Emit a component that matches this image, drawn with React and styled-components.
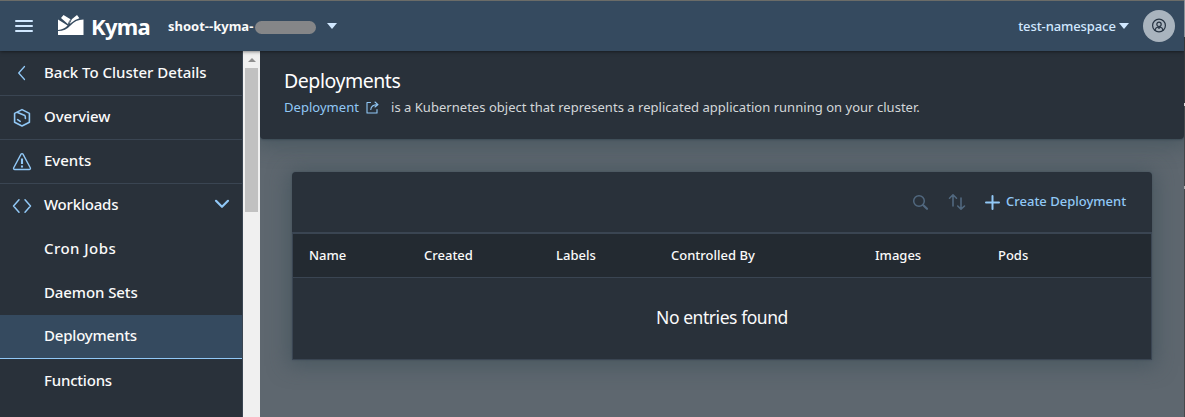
import React from 'react';
import styled, { createGlobalStyle } from 'styled-components';

const Global = createGlobalStyle`
  * { box-sizing: border-box; }
  html, body { margin: 0; height: 100%; overflow: hidden; }
  body { font-family: "Noto Sans", "Open Sans", sans-serif; color: #fafafa; background: #5b666f; }
  button { font: inherit; color: inherit; background: none; border: 0; padding: 0; }
`;

const Page = styled.div`
  width: 100vw;
  height: 100vh;
  overflow: hidden;
  display: grid;
  grid-template-rows: 51px 1fr;
  grid-template-columns: minmax(0, 1fr) 1px;
`;

const Header = styled.header`
  position: relative;
  z-index: 3;
  display: flex;
  align-items: center;
  border-top: 1px solid #6b6c68;
  background: #354a5f;
  box-shadow: 0 0 4px rgba(0, 0, 0, 0.7);
  padding: 0 9px 0 15px;
`;

const WindowEdge = styled.div`
  grid-row: 1 / 3;
  grid-column: 2;
  z-index: 4;
  background: linear-gradient(#8a9096 0 37px, #35383b 37px 103px, #d5d5d5 103px 106px, #45484b 106px 186px, #b0b0b0 186px 189px, #46494c 189px);
`;

const MenuButton = styled.button`
  display: flex;
  width: 18px;
  height: 14px;
  flex-direction: column;
  justify-content: space-between;
  padding: 1px 0;
  span { height: 2px; background: #d1e8ff; border-radius: 1px; }
`;

const Brand = styled.div`
  display: flex;
  align-items: center;
  margin-left: 24px;
  width: 94px;
  gap: 7px;
  svg { flex: none; margin-bottom: 2px; }
`;

const BrandName = styled.span`
  font-size: 22px;
  font-weight: 700;
  line-height: 30px;
  letter-spacing: -0.7px;
  color: #fff;
`;

const ClusterName = styled.button`
  display: flex;
  align-items: center;
  margin-left: 17px;
  font-size: 13px;
  font-weight: 700;
`;

const Redaction = styled.span`
  width: 61px;
  height: 13px;
  border-radius: 7px;
  background: #858688;
  margin: 2px 11px 0 0;
`;

const NameText = styled.span`width: 87px; white-space: nowrap; text-align: left;`;

const Triangle = styled.span`
  border: 5px solid transparent;
  border-top: 6px solid #d1e8ff;
  border-bottom: 0;
`;

const Namespace = styled.button`
  display: flex;
  align-items: center;
  gap: 3px;
  margin-left: auto;
  font-size: 13px;
  color: #d1e8ff;
  font-weight: 500;
  padding-bottom: 1px;
`;
const NamespaceText = styled.span`width: 98px; white-space: nowrap; letter-spacing: -0.1px;`;

const Avatar = styled.div`
  width: 32px;
  height: 32px;
  margin-left: 14px;
  border-radius: 50%;
  background: #a9b4be;
  display: grid;
  place-items: center;
`;

const Body = styled.div`
  display: grid;
  grid-template-columns: 243px 17px minmax(0, 1fr);
  min-height: 0;
`;

const Sidebar = styled.nav`
  background: #29313a;
  border-right: 1px solid #3a4552;
  padding-top: 1px;
  overflow: hidden;
`;

const NavItem = styled.a`
  display: flex;
  align-items: center;
  height: ${p => (p.$tall ? 45 : 44)}px;
  padding-left: ${p => (p.$child ? 44 : 12)}px;
  padding-right: 12px;
  padding-bottom: 3px;
  margin-top: ${p => (p.$selected ? -1 : 0)}px;
  border-bottom: 1px solid ${p => (p.$selected ? '#91c8f6' : p.$line ? '#3a4552' : 'transparent')};
  background: ${p => (p.$selected ? '#354a5f' : 'transparent')};
  font-size: 15px;
  font-weight: 500;
  letter-spacing: ${p => p.$spacing || 0}px;
  white-space: nowrap;
`;

const NavIcon = styled.span`
  width: 32px;
  height: 20px;
  flex: none;
  display: flex;
  margin-top: 4px;
`;

const Expand = styled.span`
  margin-left: auto;
  display: flex;
`;

const Scrollbar = styled.div`
  background: #f0f0f0;
  display: flex;
  flex-direction: column;
  align-items: center;
`;
const ScrollUp = styled.span`
  margin: 7px 0 6px;
  border: 4px solid transparent;
  border-bottom: 4px solid #8f8f8f;
  border-top: 0;
`;
const ScrollThumb = styled.div`
  width: 13px;
  height: 144px;
  background: #c1c1c1;
`;

const Main = styled.main`
  display: flex;
  flex-direction: column;
  background: #5e676f;
  overflow: hidden;
`;

const PageHead = styled.section`
  height: 88px;
  flex: none;
  padding: 16px 24px;
  background: #29313a;
  border-radius: 0 0 4px 4px;
  box-shadow: 0 2px 20px 4px rgba(54, 74, 84, 0.55), 0 1px 2px rgba(45, 60, 72, 0.6);
`;

const Title = styled.h1`
  margin: 0;
  font-size: 19.5px;
  line-height: 28px;
  font-weight: 400;
  letter-spacing: -0.45px;
  color: #fff;
`;

const Description = styled.p`
  margin: 2px 0 0;
  display: flex;
  align-items: center;
  height: 20px;
  font-size: 13px;
  letter-spacing: 0.03px;
  color: #d3d7d9;
  white-space: nowrap;
  svg { margin: 0 12px 0 7px; }
`;

const Link = styled.a`color: #91c8f6; width: 75px;`;

const Card = styled.section`
  margin: 33px 32px 0;
  height: 188px;
  display: flex;
  flex-direction: column;
  border-radius: 4px 4px 0 0;
  background: #29313a;
  box-shadow: 0 2px 20px 4px rgba(54, 74, 84, 0.5), 0 0 2px rgba(45, 60, 72, 0.5);
`;

const Toolbar = styled.div`
  height: 60px;
  display: flex;
  align-items: center;
  justify-content: flex-end;
  padding-right: 26px;
`;
const ToolIcon = styled.button`
  display: flex;
  margin-right: ${p => p.$gap}px;
`;
const CreateButton = styled.button`
  display: flex;
  align-items: center;
  gap: 6px;
  color: #91c8f6;
  font-size: 13px;
  font-weight: 500;
  white-space: nowrap;
`;
const CreateText = styled.span`width: 120px; text-align: left; padding-bottom: 2px;`;

const Table = styled.div`
  flex: 1;
  display: flex;
  flex-direction: column;
  border: 1px solid #3a4552;
  border-top-width: 2px;
`;
const HeadRow = styled.div`
  height: 44px;
  display: grid;
  grid-template-columns: 115px 132px 115px 204px 123px 1fr;
  align-items: center;
  padding: 0 0 2px 16px;
  background: #232a31;
  border-bottom: 1px solid #3a4552;
  font-size: 13px;
  font-weight: 500;
`;
const Empty = styled.div`
  flex: 1;
  display: flex;
  align-items: center;
  justify-content: center;
  padding-bottom: 3px;
  font-size: 17.5px;
  letter-spacing: -0.45px;
`;

const Stroke = ({ w = 20, h = 20, sw = 1.3, color = '#91c8f6', children }) => (
  <svg width={w} height={h} viewBox={`0 0 ${w} ${h}`} fill="none" stroke={color} strokeWidth={sw} strokeLinecap="round" strokeLinejoin="round">
    {children}
  </svg>
);

const icons = {
  back: <Stroke><path d="M12.5 2.5 6.7 9 12.5 15.5" /></Stroke>,
  overview: (
    <Stroke sw={1.6}>
      <path d="M10 1.6 17.4 5.4V14.2L10 18 2.6 14.2V5.4Z" />
      <path d="M5.6 4.6 12.9 7.6Q13.4 8 13.4 10.4M5.6 11.6 8.2 13.4" />
    </Stroke>
  ),
  events: (
    <Stroke sw={1.4}>
      <path d="M8.9 2.3Q10 1 11.1 2.3L18.4 16Q18.6 17.5 17.2 17.5H2.8Q1.4 17.5 1.6 16Z" />
      <path strokeWidth="2.1" strokeLinecap="butt" d="M10 6.5V12M10 13.4V15.4" />
    </Stroke>
  ),
  workloads: <Stroke sw={1.5}><path d="M7 3.8 1.5 10 7 16.2M13 3.8 18.5 10 13 16.2" /></Stroke>,
};

const items = [
  { label: 'Back To Cluster Details', icon: 'back', line: true },
  { label: 'Overview', icon: 'overview', line: true, spacing: -0.1 },
  { label: 'Events', icon: 'events', line: true },
  { label: 'Workloads', icon: 'workloads', expanded: true, spacing: -0.2 },
  { label: 'Cron Jobs', child: true, spacing: 0.45 },
  { label: 'Daemon Sets', child: true, spacing: -0.1 },
  { label: 'Deployments', child: true, selected: true, spacing: -0.2 },
  { label: 'Functions', child: true, tall: true, spacing: -0.2 },
];

const columns = ['Name', 'Created', 'Labels', 'Controlled By', 'Images', 'Pods'];

export default function App() {
  return (
    <>
      <Global />
      <Page>
        <Header>
          <MenuButton aria-label="Menu"><span /><span /><span /></MenuButton>
          <Brand>
            <svg width="27" height="22" viewBox="0 0 27 22">
              <path fill="#fff" d="M1 5.5 10.6 11.6Q7.2 15.6 1 16ZM4 4 6.5 1 13.9 5.4 11.4 10.4ZM14.8 5.3 20 1 22.4 4.3Q16.8 5.8 12.6 10ZM26.5 5.5V21H1V17.1Q8.5 17 13.5 11.4 18.5 5.7 26.5 5.5Z" />
              <path fill="none" stroke="#354a5f" strokeWidth="0.8" d="M13.9 5.2Q11.5 8 11 11" />
            </svg>
            <BrandName>Kyma</BrandName>
          </Brand>
          <ClusterName>
            <NameText>shoot--kyma-</NameText>
            <Redaction />
            <Triangle />
          </ClusterName>
          <Namespace><NamespaceText>test-namespace</NamespaceText><Triangle /></Namespace>
          <Avatar>
            <Stroke w={16} h={16} sw={1.2} color="#263342">
              <circle cx="8" cy="7.5" r="6.4" />
              <circle cx="8" cy="6.3" r="2.2" />
              <path d="M4 12.2Q4.5 9.6 6.7 9L8 10.3 9.3 9Q11.5 9.6 12 12.2" />
            </Stroke>
          </Avatar>
        </Header>
        <WindowEdge />
        <Body>
          <Sidebar>
            {items.map(i => (
              <NavItem key={i.label} $child={i.child} $selected={i.selected} $line={i.line} $tall={i.tall} $spacing={i.spacing}>
                {i.icon && <NavIcon>{icons[i.icon]}</NavIcon>}
                {i.label}
                {i.expanded && <Expand><Stroke w={16} h={10} sw={2.2}><path d="M2 1.8 8 7.8 14 1.8" /></Stroke></Expand>}
              </NavItem>
            ))}
          </Sidebar>
          <Scrollbar><ScrollUp /><ScrollThumb /></Scrollbar>
          <Main>
            <PageHead>
              <Title>Deployments</Title>
              <Description>
                <Link>Deployment</Link>
                <Stroke w={13} h={13} sw={1.1}>
                  <path d="M4.5 1.5H1V12H11V8.5M4.8 8.5Q5 3.8 11.5 3.6M9 1 12 3.6 9 6" />
                </Stroke>
                is a Kubernetes object that represents a replicated application running on your cluster.
              </Description>
            </PageHead>
            <Card>
              <Toolbar>
                <ToolIcon $gap={19} aria-label="Search">
                  <Stroke w={17} h={17} color="#51687f" sw={1.5}><circle cx="7" cy="7" r="5.3" /><path strokeWidth="2.2" d="M11.3 11.3 15 14.8" /></Stroke>
                </ToolIcon>
                <ToolIcon $gap={19} aria-label="Sort">
                  <Stroke w={18} h={18} color="#51687f" sw={1.6}><path d="M5 13V2M1.5 5.2 5 1.8 8.5 5.2M13 5V16M9.7 13 13 16.2 16.5 13" /></Stroke>
                </ToolIcon>
                <CreateButton>
                  <Stroke w={15} h={15} sw={2}><path d="M7.5 1V14M1 7.5H14" /></Stroke>
                  <CreateText>Create Deployment</CreateText>
                </CreateButton>
              </Toolbar>
              <Table>
                <HeadRow>{columns.map(c => <span key={c}>{c}</span>)}</HeadRow>
                <Empty>No entries found</Empty>
              </Table>
            </Card>
          </Main>
        </Body>
      </Page>
    </>
  );
}
